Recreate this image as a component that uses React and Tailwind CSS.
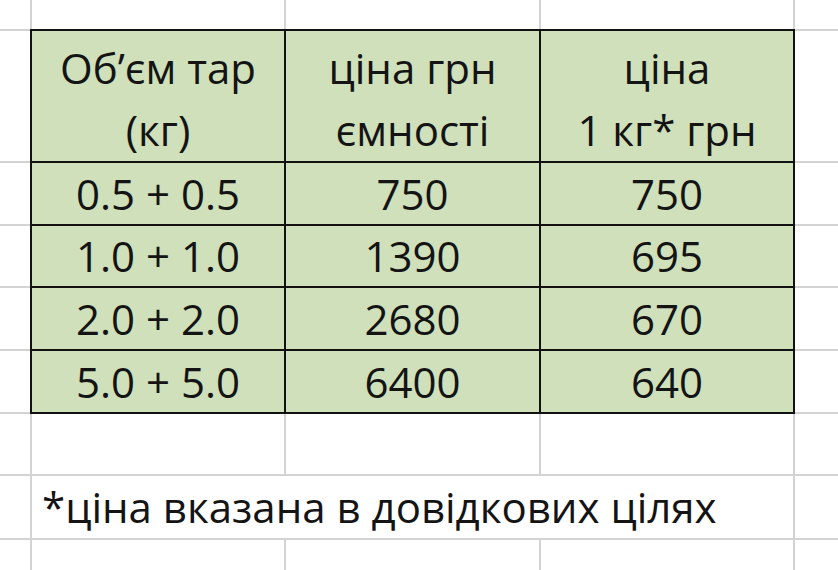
import React from "react";

const font = { fontFamily: '"Open Sans", "Noto Sans", "DejaVu Sans", sans-serif' };

function W() {
  return <div className="bg-white" />;
}

function G({ children }) {
  return (
    <div className="bg-[#cfe0bb] shadow-[0_0_0_2px_#111] flex items-center justify-center text-[42px] leading-none text-[#141414]">
      {children}
    </div>
  );
}

function H({ l1, l2 }) {
  return (
    <div className="bg-[#cfe0bb] shadow-[0_0_0_2px_#111] flex flex-col items-center pt-[6px] text-[42px] leading-[62px] text-[#141414]">
      <span>{l1}</span>
      <span>{l2}</span>
    </div>
  );
}

const rows = [
  ["0.5 + 0.5", "750", "750"],
  ["1.0 + 1.0", "1390", "695"],
  ["2.0 + 2.0", "2680", "670"],
  ["5.0 + 5.0", "6400", "640"],
];

export default function App() {
  return (
    <div
      style={font}
      className="w-[838px] h-[570px] overflow-hidden grid grid-cols-[30px_252px_253px_252px_1fr] grid-rows-[29px_130px_61px_60px_61px_61px_60px_62px_1fr] gap-[2px] bg-[#d3d3d3]"
    >
      <W /><W /><W /><W /><W />

      <W />
      <H l1="Об’єм тар" l2="(кг)" />
      <H l1="ціна грн" l2="ємності" />
      <H l1="ціна" l2="1 кг* грн" />
      <W />

      {rows.map((r, i) => (
        <React.Fragment key={i}>
          <W />
          <G>{r[0]}</G>
          <G>{r[1]}</G>
          <G>{r[2]}</G>
          <W />
        </React.Fragment>
      ))}

      <W /><W /><W /><W /><W />

      <W />
      <div className="col-span-3 bg-white flex items-center pl-[10px] text-[42px] leading-none text-[#141414] whitespace-nowrap">
        *ціна вказана в довідкових цілях
      </div>
      <W />

      <W /><W /><W /><W /><W />
    </div>
  );
}
